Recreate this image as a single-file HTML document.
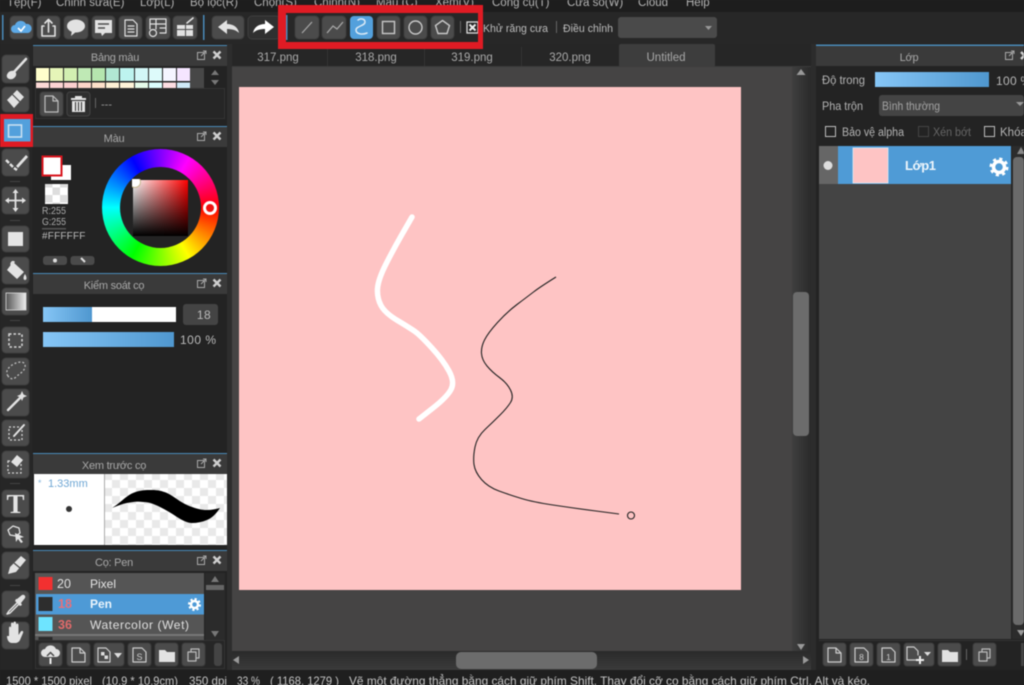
<!DOCTYPE html>
<html lang="vi">
<head>
<meta charset="utf-8">
<title>MediBang Paint</title>
<style>
html,body{margin:0;padding:0;width:1024px;height:685px;overflow:hidden;background:#232323}
#all{position:absolute;left:0;top:0;width:1024px;height:685px;filter:blur(.4px)}
svg#s{position:absolute;left:0;top:0;display:block}
svg text{font-family:"Liberation Sans","DejaVu Sans",sans-serif;font-size:11.5px}
:where(svg text:not([fill])){fill:#bdbdbd}
.m{fill:#b4b4b4;font-size:11.5px}
.h{fill:#a8a8a8;font-size:11px;letter-spacing:-.25px;text-anchor:middle}
.b{fill:#4b4b4b;stroke:#3d3d3d;stroke-width:1}
.i{fill:none;stroke:#e2e2e2;stroke-width:1.6;stroke-linejoin:round;stroke-linecap:round}
.f{fill:#e2e2e2;stroke:none}
.hd{fill:#3a3a3a}
.bl{fill:#4a8ab8}
#wheel{position:absolute;left:102px;top:149px;width:117px;height:117px;border-radius:50%;background:conic-gradient(#8000ff 0deg,#f0f 30deg,#f00 90deg,#ff0 150deg,#0f0 210deg,#0ff 270deg,#00f 330deg,#8000ff 360deg)}
#hole{position:absolute;left:120px;top:167px;width:81px;height:81px;border-radius:50%;background:#232323}
#sq{position:absolute;left:133px;top:180px;width:55px;height:56px;background:linear-gradient(to bottom,rgba(0,0,0,0),#000),linear-gradient(to right,#fff,#f00)}
#mk{position:absolute;left:203px;top:201px;width:8px;height:8px;border:3px solid #fff;border-radius:50%;background:#e11}
#mk2{position:absolute;left:129px;top:176px;width:10px;height:10px;border:1px solid #c8b890;border-radius:50%;background:#fff;clip-path:inset(3px 0 0 3px)}
</style>
</head>
<body>
<div id="all">
<svg id="s" width="1024" height="685" viewBox="0 0 1024 685" xmlns="http://www.w3.org/2000/svg">
<defs>
<pattern id="ck" width="16" height="16" patternUnits="userSpaceOnUse"><rect width="16" height="16" fill="#fff"/><rect width="8" height="8" fill="#e9e9e9"/><rect x="8" y="8" width="8" height="8" fill="#e9e9e9"/></pattern>
<pattern id="ck2" width="15" height="15" patternUnits="userSpaceOnUse"><rect width="15" height="15" fill="#fff"/><rect width="7.5" height="7.5" fill="#ddd"/><rect x="7.5" y="7.5" width="7.5" height="7.5" fill="#ddd"/></pattern>
<linearGradient id="sl" x1="0" x2="1" y1="0" y2="0"><stop offset="0" stop-color="#86c6f6"/><stop offset="1" stop-color="#4f97cf"/></linearGradient>
<linearGradient id="sv" x1="0" x2="1" y1="0" y2="0"><stop offset="0" stop-color="#3f3f3f"/><stop offset="1" stop-color="#2a2a2a"/></linearGradient>
<linearGradient id="sh" x1="0" x2="0" y1="0" y2="1"><stop offset="0" stop-color="#2a2a2a"/><stop offset="1" stop-color="#3b3b3b"/></linearGradient>
<linearGradient id="gr" x1="0" x2="1" y1="0" y2="0"><stop offset="0" stop-color="#555"/><stop offset="1" stop-color="#eee"/></linearGradient>
</defs>
<rect width="1024" height="685" fill="#232323"/>

<!-- menu -->
<rect width="1024" height="12" fill="#1d1d1d"/>
<text class="m" x="7" y="6">Tệp(F)</text><text class="m" x="56" y="6">Chỉnh sửa(E)</text><text class="m" x="140" y="6">Lớp(L)</text><text class="m" x="190" y="6">Bộ lọc(R)</text><text class="m" x="254" y="6">Chọn(S)</text><text class="m" x="314" y="6">Chỉnh(N)</text><text class="m" x="376" y="6">Màu (C)</text><text class="m" x="435" y="6">Xem(V)</text><text class="m" x="492" y="6">Công cụ(T)</text><text class="m" x="567" y="6">Cửa sổ(W)</text><text class="m" x="638" y="6">Cloud</text><text class="m" x="686" y="6">Help</text>
<!-- toolbar -->
<rect y="12" width="1024" height="32" fill="#272727"/>
<rect x="2" y="15" width="1.5" height="25" fill="#4a8ab8"/>
<rect x="203" y="15" width="1.5" height="25" fill="#4a8ab8"/>
<rect x="286" y="15" width="1.5" height="25" fill="#4a8ab8"/>
<rect class="b" x="10" y="16" width="23" height="23" rx="4"/>
<path d="M15 33a4 4 0 0 1 0-8 6 6 0 0 1 11-1 4.500 4.500 0 0 1 2 9z" fill="#5da9e6"/><path d="M18 28l3 3 4-5" fill="none" stroke="#fff" stroke-width="1.6"/>
<rect class="b" x="37" y="16" width="23" height="23" rx="4"/>
<path class="i" d="M44 26h-2v10h13V26h-2M48.500 32V20M45 23l3.500-3.500L52 23"/>
<rect class="b" x="64" y="16" width="24" height="23" rx="4"/>
<ellipse class="f" cx="76" cy="26" rx="9" ry="6.500"/><path class="f" d="M72 30l-1 6 6-5z"/>
<rect class="b" x="92" y="16" width="23" height="23" rx="4"/>
<path class="f" d="M95 20h17v13h-7l-3 3-1-3h-6z"/><path d="M98 24h11M98 28h7" stroke="#4b4b4b" stroke-width="1.500"/>
<rect class="b" x="119" y="16" width="23" height="23" rx="4"/>
<path class="i" style="stroke-width:1.200" d="M125 20h8l4 4v12h-12zM128 26h6M128 29h6M128 32h6"/>
<rect class="b" x="146" y="16" width="24" height="23" rx="4"/>
<path class="i" style="stroke-width:1.200" d="M150 19h16v14h-6M150 19v10M150 24h16M156 19v10M160 28h6"/><circle class="i" style="stroke-width:1.200" cx="153" cy="33" r="3.500"/>
<rect class="b" x="173" y="16" width="24" height="23" rx="4"/>
<path class="f" d="M177 25h8v4h-8zM186 25h7v4h-7zM177 30h8v6h-8zM186 30h7v6h-7z"/><path class="i" d="M187 23l6-5"/>
<rect class="b" x="212" y="16" width="32" height="23" rx="4"/>
<path class="f" d="M218 27l9-7v4c6 0 11 3 12 9-3-3-7-4-12-4v5z"/>
<rect x="248" y="16" width="32" height="23" rx="4" fill="#303030" stroke="#3d3d3d"/>
<path fill="#fff" d="M274 27l-9-7v4c-6 0-11 3-12 9 3-3 7-4 12-4v5z"/>

<rect class="b" x="295" y="16" width="24" height="23" rx="4"/><path style="stroke:#a8a8a8;stroke-width:1.200;fill:none" d="M302 33l10-11"/>
<rect class="b" x="322" y="16" width="24" height="23" rx="4"/><path style="stroke:#a8a8a8;stroke-width:1.300;fill:none" d="M327 33l6-7 4 3 6-7"/>
<rect x="350" y="16" width="23" height="23" rx="4" fill="#53a0dc"/><path fill="none" stroke="#dbeaf6" stroke-width="1.500" stroke-linecap="round" d="M358 20c3-2 7-1 7 2 0 4-9 4-9 8 0 4 6 5 11 3"/>
<rect class="b" x="377" y="16" width="23" height="23" rx="4"/><rect x="382.500" y="21.500" width="12" height="12" fill="none" stroke="#c8c8c8" stroke-width="1.400"/>
<rect class="b" x="404" y="16" width="23" height="23" rx="4"/><circle cx="415.500" cy="27.500" r="6.500" fill="none" stroke="#c8c8c8" stroke-width="1.400"/>
<rect class="b" x="431" y="16" width="23" height="23" rx="4"/><path fill="none" stroke="#c8c8c8" stroke-width="1.400" d="M442.500 20.500l7 5-2.500 8h-9l-2.500-8z"/>
<rect x="460" y="21" width="1" height="12" fill="#666"/>
<rect x="467" y="22" width="11" height="11" fill="none" stroke="#ddd" stroke-width="1.300"/><path d="M469.500 24.500l6 6M475.500 24.500l-6 6" stroke="#eee" stroke-width="2"/>
<text x="483" y="32" style="font-size:11px" textLength="65" lengthAdjust="spacingAndGlyphs">Khử răng cưa</text>
<rect x="556" y="21" width="1" height="12" fill="#666"/>
<text x="563" y="32" style="font-size:11px" textLength="50" lengthAdjust="spacingAndGlyphs">Điều chỉnh</text>
<rect x="618" y="17" width="99" height="21" rx="3" fill="#4a4a4a"/>
<path d="M705 26h7l-3.500 4z" fill="#999"/>

<!-- left tools -->
<rect x="0" y="44" width="32" height="626" fill="#262626"/>
<rect class="b" x="2" y="55" width="27" height="28" rx="4"/>
<path class="i" style="stroke-width:2.500" d="M26 59L14 72"/><ellipse class="f" cx="11.500" cy="75" rx="5" ry="4" transform="rotate(-30 11.500 75)"/>
<rect class="b" x="2" y="87" width="27" height="25" rx="4"/>
<path class="f" d="M17 90l7 7-10 11-7-8z"/><path d="M12 94l8 8" stroke="#4b4b4b" stroke-width="1.200"/>
<rect x="0" y="114" width="36" height="33" fill="#e01b24"/>
<rect x="4" y="119" width="26.500" height="22.500" fill="#53a0dc"/>
<rect x="8.500" y="125" width="13" height="12" fill="none" stroke="#cfe3f3" stroke-width="1.500"/>
<rect class="b" x="2" y="149" width="27" height="27" rx="4"/>
<path class="f" d="M16 166l10-11 2 2-10 11z"/><path d="M6 160l3 3M10 164l3 3M14 168l3 2" stroke="#e2e2e2" stroke-width="2.500"/>
<rect x="10" y="181" width="10" height="1" fill="#444"/>
<rect class="b" x="2" y="187" width="27" height="27" rx="4"/>
<path class="i" style="stroke-width:1.800" d="M15.500 192v17M7 200.500h17"/><path class="f" d="M15.500 189l3 4h-6zM15.500 212l3-4h-6zM5 200.500l4-3v6zM26 200.500l-4-3v6z"/>
<rect x="10" y="220" width="10" height="1" fill="#444"/>
<rect class="b" x="2" y="226" width="27" height="26" rx="4"/>
<rect x="8" y="232" width="15" height="14" fill="#e4e4e4"/>
<rect class="b" x="2" y="257" width="27" height="27" rx="4"/>
<path class="f" d="M13 262l11 10-7 7-10-9zM25 274c2 3 2 6 0 6s-2-3 0-6z"/><path class="i" d="M12 267c-2-4 0-6 2-5"/>
<rect class="b" x="2" y="288" width="27" height="27" rx="4"/>
<rect x="6" y="293" width="20" height="17" fill="url(#gr)" stroke="#ddd" stroke-width=".8"/>
<rect x="10" y="320" width="10" height="1" fill="#444"/>
<rect class="b" x="2" y="327" width="27" height="26" rx="4"/>
<rect x="9" y="334" width="13" height="13" fill="none" stroke="#d8d8d8" stroke-width="1.500" stroke-dasharray="2.500 2"/>
<rect class="b" x="2" y="358" width="27" height="27" rx="4"/>
<path d="M8 376c-4-6 3-11 8-13 5-2 10-1 9 4-1 5-5 6-9 10-3 3-6 2-8-1z" fill="none" stroke="#bdbdbd" stroke-width="1.300" stroke-dasharray="2 2"/>
<rect class="b" x="2" y="389" width="27" height="27" rx="4"/>
<path class="i" style="stroke-width:2.400" d="M8 410l12-12"/><path class="f" d="M22 391l1.500 3.500 3.500 1.500-3.500 1.500L22 401l-1.500-3.500L17 396l3.500-1.500z"/>
<rect class="b" x="2" y="420" width="27" height="26" rx="4"/>
<rect x="9" y="427" width="13" height="13" fill="none" stroke="#d8d8d8" stroke-width="1.300" stroke-dasharray="2 2"/><path class="i" style="stroke-width:2" d="M14 436l10-11"/>
<rect class="b" x="2" y="451" width="27" height="27" rx="4"/>
<rect x="8" y="461" width="13" height="12" fill="none" stroke="#d8d8d8" stroke-width="1.300" stroke-dasharray="2 2"/><path class="f" d="M17 455l6 5-6 7-6-5z"/>
<rect x="10" y="483" width="10" height="1" fill="#444"/>
<rect class="b" x="2" y="490" width="27" height="27" rx="4"/>
<text x="15.500" y="513" text-anchor="middle" style="font-family:'Liberation Serif',serif;font-size:27px;font-weight:bold" fill="#e4e4e4">T</text>
<rect class="b" x="2" y="521" width="27" height="27" rx="4"/>
<path class="i" style="stroke-width:1.300" d="M8 530l5-4 6 2 1 5-4 3-6-1z"/><path class="f" d="M15 533l9 4-4 1 3 4-2 1-3-4-2 3z"/>
<rect class="b" x="2" y="552" width="27" height="27" rx="4"/>
<path class="f" d="M21 556l5 4-10 12-8 2 2-7z"/><path d="M14 563l6 5" stroke="#4b4b4b" stroke-width="1.300"/>
<rect x="10" y="585" width="10" height="1" fill="#444"/>
<rect class="b" x="2" y="591" width="27" height="26" rx="4"/>
<path class="i" style="stroke-width:1.500" d="M18 602l-9 9-2 3 3-1 9-9"/><path class="f" d="M17 599l5-4c2-1 4 1 3 3l-4 5 1 2-2 1-5-5 1-2z"/>
<rect class="b" x="2" y="622" width="27" height="27" rx="4"/>
<path class="f" d="M9 636v-8c0-2 2-2 2 0v4-8c0-2 2.500-2 2.500 0v7-8c0-2 2.500-2 2.500 0v8-6c0-2 2.500-2 2.500 0v10l2-3c1-2 3.500-1 2.500 1l-3 7c-1 2-3 3-5 3h-3c-3 0-5-3-5-7z"/>

<!-- left panels bg -->
<rect x="33" y="45" width="194" height="625" fill="#232323"/>
<rect x="227" y="44" width="5" height="626" fill="#2d2d2d"/>
<!-- panel 1 -->
<rect x="33" y="45" width="194" height="1.500" class="bl"/>
<rect x="33" y="46" width="194" height="20" class="hd"/>
<text class="h" x="115" y="61">Bảng màu</text>
<g transform="translate(0,1)"><rect x="197.500" y="51.500" width="7" height="7" fill="none" stroke="#a8a8a8"/><path d="M201 55l5-5M203 50h3v3" stroke="#a8a8a8" fill="none"/><path d="M213.500 50.500l7 7M220.500 50.500l-7 7" stroke="#cfcfcf" stroke-width="2.400"/></g>
<rect x="36" y="68" width="13" height="13" fill="#ffffcc"/><rect x="50" y="68" width="13" height="13" fill="#e5f5b8"/><rect x="64" y="68" width="13" height="13" fill="#d2efb1"/><rect x="78" y="68" width="13" height="13" fill="#bfe9b5"/><rect x="92" y="68" width="13" height="13" fill="#b5e5ae"/><rect x="106" y="68" width="13" height="13" fill="#b1e7d3"/><rect x="120" y="68" width="14" height="13" fill="#bdf3ef"/><rect x="135" y="68" width="13" height="13" fill="#d2f7f7"/><rect x="149" y="68" width="13" height="13" fill="#ddfafa"/><rect x="163" y="68" width="13" height="13" fill="#f5f5ff"/><rect x="177" y="68" width="13" height="13" fill="#f5e5ff"/>
<rect x="36" y="82.500" width="13" height="5.500" fill="#fcd9d6"/><rect x="50" y="82.500" width="13" height="5.500" fill="#fcd3d3"/><rect x="64" y="82.500" width="13" height="5.500" fill="#fccfcf"/><rect x="78" y="82.500" width="13" height="5.500" fill="#fcd5c9"/><rect x="92" y="82.500" width="13" height="5.500" fill="#fde0c9"/><rect x="106" y="82.500" width="13" height="5.500" fill="#fdf0d5"/><rect x="120" y="82.500" width="14" height="5.500" fill="#fef3d8"/><rect x="135" y="82.500" width="13" height="5.500" fill="#e5fbea"/><rect x="149" y="82.500" width="13" height="5.500" fill="#ddffff"/><rect x="163" y="82.500" width="13" height="5.500" fill="#fddde2"/><rect x="177" y="82.500" width="13" height="5.500" fill="#cfe9f7"/>
<rect x="190" y="68" width="14" height="20" fill="#474747"/>
<path d="M215 70l4 5h-8zM215 85l4-5h-8z" fill="#777"/>
<rect x="35.500" y="88.500" width="189" height="30" fill="#262626" stroke="#333"/>
<rect class="b" x="40" y="92" width="23" height="24" rx="3"/>
<path class="i" style="stroke-width:1.200;stroke:#bdbdbd" d="M45 96h8l5 5v11H45zM53 96v5h5"/>
<rect x="67" y="92" width="23" height="24" rx="3" fill="#2f2f2f" stroke="#444"/>
<path class="f" d="M71 98h15v2H71zM75 96h7v2h-7zM72 101h13v11H72z"/><path d="M75.500 102v9M78.500 102v9M81.500 102v9" stroke="#2f2f2f"/>
<rect x="95" y="98" width="1" height="10" fill="#666"/>
<text x="101" y="108" style="font-size:11px" fill="#999">---</text>

<!-- panel màu -->
<rect x="33" y="126" width="194" height="1.500" class="bl"/>
<rect x="33" y="127" width="194" height="20" class="hd"/>
<text class="h" x="114" y="142">Màu</text>
<g transform="translate(0,82)"><rect x="197.500" y="51.500" width="7" height="7" fill="none" stroke="#a8a8a8"/><path d="M201 55l5-5M203 50h3v3" stroke="#a8a8a8" fill="none"/><path d="M213.500 50.500l7 7M220.500 50.500l-7 7" stroke="#cfcfcf" stroke-width="2.400"/></g>
<rect x="51" y="165" width="20" height="15" fill="#fff"/>
<rect x="42.500" y="156.500" width="19" height="19" fill="#fff" stroke="#d8141c" stroke-width="2"/>
<rect x="45" y="184" width="23" height="20" fill="url(#ck2)"/>
<text x="42" y="214" style="font-size:10px" fill="#aaa" textLength="24" lengthAdjust="spacingAndGlyphs">R:255</text>
<text x="42" y="225" style="font-size:10px" fill="#aaa" textLength="24" lengthAdjust="spacingAndGlyphs">G:255</text>
<rect x="42" y="228" width="24" height="1.500" fill="#555"/>
<text x="42" y="239" style="font-size:10px;letter-spacing:.2px" fill="#bbb">#FFFFFF</text>
<rect x="43" y="256" width="24" height="9" rx="3" fill="#4a4a4a"/><circle cx="55" cy="260.500" r="2" fill="#ddd"/>
<rect x="70.500" y="256" width="24" height="9" rx="3" fill="#4a4a4a"/><path d="M81 258l4 4" stroke="#ddd" stroke-width="2"/>

<!-- panel kiểm soát -->
<rect x="33" y="273" width="194" height="1.500" class="bl"/>
<rect x="33" y="274" width="194" height="20" class="hd"/>
<text class="h" x="114" y="289">Kiểm soát cọ</text>
<g transform="translate(0,229)"><rect x="197.500" y="51.500" width="7" height="7" fill="none" stroke="#a8a8a8"/><path d="M201 55l5-5M203 50h3v3" stroke="#a8a8a8" fill="none"/><path d="M213.500 50.500l7 7M220.500 50.500l-7 7" stroke="#cfcfcf" stroke-width="2.400"/></g>
<rect x="43" y="307" width="133" height="15" fill="#fff"/>
<rect x="43" y="307" width="49" height="15" fill="url(#sl)"/>
<rect x="183" y="304" width="35" height="21" rx="3" fill="#444"/>
<text x="204" y="319" text-anchor="middle" style="font-size:12px;letter-spacing:.5px" fill="#bbb">18</text>
<rect x="43" y="332" width="131" height="15" fill="url(#sl)"/>
<text x="180" y="344" style="font-size:12px;letter-spacing:.5px" fill="#bbb">100 %</text>

<!-- xem trước -->
<rect x="33" y="453" width="194" height="1.500" class="bl"/>
<rect x="33" y="454" width="194" height="20" class="hd"/>
<text class="h" x="114" y="469">Xem trước cọ</text>
<g transform="translate(0,409)"><rect x="197.500" y="51.500" width="7" height="7" fill="none" stroke="#a8a8a8"/><path d="M201 55l5-5M203 50h3v3" stroke="#a8a8a8" fill="none"/><path d="M213.500 50.500l7 7M220.500 50.500l-7 7" stroke="#cfcfcf" stroke-width="2.400"/></g>
<rect x="34" y="474" width="70" height="71" fill="#fff"/>
<rect x="104" y="474" width="1" height="71" fill="#aaa"/>
<rect x="105" y="474" width="122" height="71" fill="url(#ck)"/>
<text x="38" y="486" style="font-size:9px" fill="#8ab8dc">*</text>
<text x="48" y="487" style="font-size:11px" fill="#6ea6d4">1.33mm</text>
<circle cx="69" cy="509" r="3" fill="#333"/>
<path d="M112 508C120 503 126 496 133 493C140 490 146 490 152 490C158 490 162 491 167 493C175 497 180 502 187 505C194 508 200 510 207 510C212 510 216 509 220 508C216 514 212 518 207 520C202 522 197 523 192 523C187 523 182 520 177 517C171 513 166 510 160 507C154 504 149 502 143 502C137 501 132 502 127 503C122 504 117 506 112 508Z" fill="#000"/>

<!-- cọ -->
<rect x="33" y="550" width="194" height="1.500" class="bl"/>
<rect x="33" y="551" width="194" height="20" class="hd"/>
<text class="h" x="114" y="566">Cọ: Pen</text>
<g transform="translate(0,506)"><rect x="197.500" y="51.500" width="7" height="7" fill="none" stroke="#a8a8a8"/><path d="M201 55l5-5M203 50h3v3" stroke="#a8a8a8" fill="none"/><path d="M213.500 50.500l7 7M220.500 50.500l-7 7" stroke="#cfcfcf" stroke-width="2.400"/></g>
<rect x="35" y="573" width="169" height="67" fill="#555"/>
<rect x="36" y="594" width="168" height="20.500" fill="#4e9ad6"/>
<rect x="38.500" y="577" width="14" height="13" fill="#f23030"/>
<text x="57" y="588" style="font-size:12.500px" fill="#e0e0e0">20</text>
<text x="90" y="588" style="font-size:12px" fill="#e4e4e4">Pixel</text>
<rect x="38.500" y="597" width="14" height="14" fill="#2d2d2d"/>
<text x="58" y="608" style="font-size:12.500px;font-weight:bold" fill="#e8707a">18</text>
<text x="90" y="608" style="font-size:12px;font-weight:bold" fill="#eaf4fb">Pen</text>
<rect x="38.500" y="617" width="14" height="14" fill="#6ee4ff"/>
<text x="58" y="629" style="font-size:12.500px;font-weight:bold" fill="#e06a6a">36</text>
<text x="90" y="629" style="font-size:12px" fill="#e0e0e0" textLength="99" lengthAdjust="spacing">Watercolor (Wet)</text>
<rect x="35" y="634" width="169" height="2" fill="#777"/>
<rect x="38.500" y="637" width="14" height="3" fill="#2a2a2a"/>
<circle cx="194.500" cy="604.500" r="3.500" fill="none" stroke="#fff" stroke-width="2.500"/><circle cx="194.500" cy="604.500" r="5.500" fill="none" stroke="#fff" stroke-width="2" stroke-dasharray="2.200 2.100"/>
<rect x="205" y="573" width="20" height="67" fill="#2b2b2b"/>
<rect x="206" y="585" width="18" height="5" fill="#666"/>
<path d="M215 576l4 6h-8zM215 637l4-6h-8z" fill="#777"/>
<rect x="35.500" y="640.500" width="189" height="28" fill="#262626" stroke="#333"/>
<rect class="b" x="39" y="643" width="23" height="23" rx="3"/>
<path class="f" d="M45 657a4 4 0 0 1 0-8 6 6 0 0 1 11 0 4 4 0 0 1 0 8z"/><path d="M47 656l3.500-3.500 3.500 3.500" stroke="#4b4b4b" fill="none" stroke-width="1.500"/><path d="M50.500 664v-6" stroke="#eee" stroke-width="2"/>
<rect class="b" x="67" y="643" width="23" height="23" rx="3"/>
<path class="i" style="stroke-width:1.200;stroke:#ccc" d="M72 648h8l5 5v9H72zM80 648v5h5"/>
<rect class="b" x="94" y="643" width="30" height="23" rx="3"/>
<path class="i" style="stroke-width:1.200;stroke:#ccc" d="M98 648h8l4 4v10H98z"/><rect x="101" y="652" width="3.500" height="3.500" fill="#ddd"/><rect x="104.500" y="655.500" width="3.500" height="3.500" fill="#ddd"/><path d="M114 653h8l-4 5z" fill="#ddd"/>
<rect class="b" x="128" y="643" width="23" height="23" rx="3"/>
<path class="i" style="stroke-width:1.200;stroke:#ccc" d="M133 648h9l4 4v10h-13z"/><text x="139.500" y="660" text-anchor="middle" style="font-size:9px" fill="#ccc">S</text>
<rect class="b" x="155" y="643" width="23" height="23" rx="3"/>
<path class="f" d="M159 650h6l2 2h8v10h-16z"/>
<rect class="b" x="182" y="643" width="23" height="23" rx="3"/>
<path class="i" style="stroke-width:1.200;stroke:#bbb" d="M188 652h8v9h-8zM191 652v-3h8v9h-3"/>
<rect x="214" y="643" width="8" height="23" rx="3" fill="#444"/>

<!-- tabs -->
<rect x="232" y="44" width="584" height="23" fill="#262626"/>
<rect x="232" y="66" width="584" height="1" fill="#3a3a3a"/>
<text x="278" y="61" text-anchor="middle" fill="#aaa">317.png</text>
<rect x="327" y="47" width="1" height="19" fill="#333"/>
<text x="376" y="61" text-anchor="middle" fill="#aaa">318.png</text>
<rect x="424" y="47" width="1" height="19" fill="#333"/>
<text x="472" y="61" text-anchor="middle" fill="#aaa">319.png</text>
<rect x="521" y="47" width="1" height="19" fill="#333"/>
<text x="570" y="61" text-anchor="middle" fill="#aaa">320.png</text>
<rect x="619" y="44" width="96" height="23" rx="2" fill="#3d3d3d"/>
<text x="666" y="61" text-anchor="middle" fill="#a8a8a8">Untitled</text>

<!-- canvas -->
<rect x="232" y="67" width="577" height="584" fill="#454444"/>
<rect x="239" y="87" width="502" height="503" fill="#fec4c4"/>
<path d="M412 217L402.500 233.500Q393 250 385.500 265Q378 280 377.500 289Q377 298 381 305.500Q385 313 397.500 320.500Q410 328 415 331.500Q420 335 431.500 347.500Q443 360 449 371Q455 382 451 389.500Q447 397 433 408L419 419" fill="none" stroke="#fff" stroke-width="5.500" stroke-linecap="round" stroke-linejoin="round"/>
<path d="M556 277Q540 287 533.500 292Q527 297 517 304.500Q507 312 497.500 322.500Q488 333 484.500 340Q481 347 481.500 353.500Q482 360 487 366Q492 372 499.500 377.500Q507 383 510.500 390Q514 397 510.500 402.500Q507 408 500 415Q493 422 485 429.500Q477 437 475 447Q473 457 474 464.500Q475 472 481.500 479.500Q488 487 499 491Q510 495 521.500 498.500Q533 502 553 505Q573 508 596 511L619 514" fill="none" stroke="#222" stroke-width="1.100"/>
<circle cx="631" cy="515.500" r="3.500" fill="none" stroke="#222" stroke-width="1.100"/>

<!-- canvas scrollbars -->
<rect x="792" y="67" width="19" height="584" fill="url(#sv)"/>
<path d="M801 69l4.500 6h-9z" fill="#999"/>
<rect x="793" y="292" width="16" height="144" rx="4" fill="#6c6c6c"/>
<path d="M801 650l4-6h-8z" fill="#999"/>
<rect x="232" y="651" width="579" height="19" fill="url(#sh)"/>
<rect x="456" y="652" width="141" height="17" rx="5" fill="#6c6c6c"/>
<path d="M233 660l6-4v8zM809 660l-6-4v8z" fill="#999"/>

<!-- right panel -->
<rect x="811" y="44" width="5" height="626" fill="#2c2c2c"/>
<rect x="816" y="44" width="208" height="626" fill="#232323"/>
<rect x="816" y="44.500" width="208" height="1.500" class="bl"/>
<rect x="816" y="46" width="208" height="20" class="hd"/>
<text class="h" x="909" y="61">Lớp</text>
<rect x="1005.500" y="52.500" width="7" height="7" fill="none" stroke="#a8a8a8"/><path d="M1009 56l5-5M1011 51h3v3" stroke="#a8a8a8" fill="none"/><path d="M1021 52l7 7M1028 52l-7 7" stroke="#cfcfcf" stroke-width="2.400"/>
<text x="822" y="84" style="font-size:12px" fill="#b4b4b4" textLength="43" lengthAdjust="spacingAndGlyphs">Độ trong</text>
<rect x="875" y="72" width="114" height="15" fill="url(#sl)"/>
<text x="996" y="85" style="font-size:12px;letter-spacing:.3px" fill="#b8b8b8">100 %</text>
<text x="822" y="110" style="font-size:12px" fill="#b4b4b4" textLength="41" lengthAdjust="spacingAndGlyphs">Pha trộn</text>
<rect x="879" y="95" width="145" height="21" rx="3" fill="#444"/>
<text x="882" y="110" style="font-size:12px" fill="#a4a4a4" textLength="58" lengthAdjust="spacingAndGlyphs">Bình thường</text>
<path d="M1016 102h8l-4 4z" fill="#999"/>
<rect x="825.500" y="126.500" width="10" height="10" fill="none" stroke="#bdbdbd" stroke-width="1"/>
<text x="842" y="136" fill="#b4b4b4" textLength="62" lengthAdjust="spacingAndGlyphs">Bảo vệ alpha</text>
<rect x="918.500" y="126.500" width="10" height="10" fill="none" stroke="#444" stroke-width="1"/>
<text x="933" y="136" fill="#666" textLength="38" lengthAdjust="spacingAndGlyphs">Xén bớt</text>
<rect x="984.500" y="126.500" width="10" height="10" fill="none" stroke="#bdbdbd" stroke-width="1"/>
<text x="1000" y="136" fill="#b4b4b4">Khóa</text>
<rect x="819" y="146" width="192" height="493" fill="#444"/>
<rect x="819" y="146" width="19" height="38" fill="#666"/>
<rect x="838" y="146" width="173" height="38" fill="#4f9bd6"/>
<circle cx="828" cy="165.500" r="4.500" fill="#ddd"/>
<rect x="853" y="148" width="35" height="35" fill="#fec4c4" stroke="#dfeaf3" stroke-width=".8"/>
<text x="905" y="170" style="font-size:13px;font-weight:bold" fill="#eef6fc" textLength="31" lengthAdjust="spacing">Lớp1</text>
<circle cx="999" cy="167" r="5.500" fill="none" stroke="#fff" stroke-width="3.500"/><circle cx="999" cy="167" r="8" fill="none" stroke="#fff" stroke-width="3" stroke-dasharray="3.100 3.180"/>
<rect x="1012" y="146" width="12" height="493" fill="#2c2c2c"/>
<path d="M1021 147l4 7h-8z" fill="#888"/>
<rect x="1013" y="157" width="11" height="468" rx="4" fill="#6a6a6a"/>
<path d="M1021 636l4-6h-8z" fill="#999"/>
<rect x="819" y="640" width="205" height="1" fill="#333"/>
<rect class="b" x="823" y="643" width="23" height="23" rx="3"/>
<path class="i" style="stroke-width:1.200;stroke:#ccc" d="M828 648h8l5 5v9h-13zM836 648v5h5"/>
<rect class="b" x="850" y="643" width="23" height="23" rx="3"/>
<path class="i" style="stroke-width:1.200;stroke:#ccc" d="M855 648h9l4 4v10h-13z"/><text x="861.500" y="660" text-anchor="middle" style="font-size:8.500px" fill="#ccc">8</text>
<rect class="b" x="877" y="643" width="23" height="23" rx="3"/>
<path class="i" style="stroke-width:1.200;stroke:#ccc" d="M882 648h9l4 4v10h-13z"/><text x="888.500" y="660" text-anchor="middle" style="font-size:8.500px" fill="#ccc">1</text>
<rect class="b" x="904" y="643" width="30" height="23" rx="3"/>
<path class="i" style="stroke-width:1.200;stroke:#ccc" d="M917 660h-10v-13h7l4 4v4"/><path d="M916 660h8M920 656v8" stroke="#eee" stroke-width="2"/><path d="M924 652h7l-3.500 4z" fill="#ddd"/>
<rect class="b" x="938" y="643" width="23" height="23" rx="3"/>
<path class="f" d="M942 650h6l2 2h8v10h-16z"/>
<rect x="966" y="649" width="1" height="11" fill="#666"/>
<rect class="b" x="973" y="643" width="23" height="23" rx="3"/>
<path class="i" style="stroke-width:1.200;stroke:#bbb" d="M979 652h8v9h-8zM982 652v-3h8v9h-3"/>
<rect x="1021" y="643" width="3" height="23" fill="#444"/>

<!-- status -->
<rect y="670" width="1024" height="15" fill="#1f1f1f"/>
<text x="6" y="685" style="font-size:12px" fill="#c4c4c4" textLength="86" lengthAdjust="spacingAndGlyphs">1500 * 1500 pixel</text>
<text x="102" y="685" style="font-size:12px" fill="#c4c4c4" textLength="76" lengthAdjust="spacingAndGlyphs">(10.9 * 10.9cm)</text>
<text x="189" y="685" style="font-size:12px" fill="#c4c4c4" textLength="38" lengthAdjust="spacingAndGlyphs">350 dpi</text>
<text x="237" y="685" style="font-size:12px" fill="#c4c4c4" textLength="23" lengthAdjust="spacingAndGlyphs">33 %</text>
<text x="270" y="685" style="font-size:12px" fill="#c4c4c4" textLength="69" lengthAdjust="spacingAndGlyphs">( 1168, 1279 )</text>
<text x="349" y="685" style="font-size:12px" fill="#c4c4c4" textLength="521" lengthAdjust="spacingAndGlyphs">Vẽ một đường thẳng bằng cách giữ phím Shift. Thay đổi cỡ cọ bằng cách giữ phím Ctrl, Alt và kéo.</text>

<!-- red box over toolbar and tabs -->
<path fill="#e01b24" fill-rule="evenodd" d="M278 5H483V49H278zM286 13V42H478V13z"/>
</svg>
<div id="wheel"></div><div id="hole"></div><div id="sq"></div><div id="mk2"></div><div id="mk"></div>
</div>
</body>
</html>
